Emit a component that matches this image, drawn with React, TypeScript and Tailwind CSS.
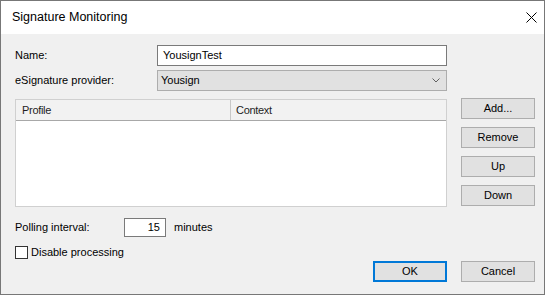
import React from 'react';

const btn =
    'h-[21px] w-[74px] bg-[#e1e1e1] border border-[#adadad] text-[11px] text-black flex items-center justify-center';

const App: React.FC = () => {
    return (
        <div className="w-[550px] h-[298px] bg-white font-['Liberation_Sans',Arial,sans-serif]">
            <div className="w-[545px] h-[295px] border border-[#777777] flex flex-col">
                {/* title bar */}
                <div className="h-[33px] bg-white flex items-center justify-between pl-[11px] pr-[7px] shrink-0">
                    <span className="text-[12.5px] text-black">Signature Monitoring</span>
                    <svg width="11" height="11" viewBox="0 0 11 11" className="mr-[0px]">
                        <path d="M0.5 0.5 L10.5 10.5 M10.5 0.5 L0.5 10.5" stroke="#000" strokeWidth="1" />
                    </svg>
                </div>

                <div className="flex-1 bg-[#f0f0f0] pl-[14px] text-[11px] text-black">
                    <div className="flex items-center mt-[11px] h-[21px]">
                        <span className="w-[142px]">Name:</span>
                        <div className="w-[290px] h-[21px] bg-white border border-[#7a7a7a] flex items-center pl-[5px]">
                            YousignTest
                        </div>
                    </div>
                    <div className="flex items-center mt-[4px] h-[21px]">
                        <span className="w-[142px]">eSignature provider:</span>
                        <div className="w-[290px] h-[21px] bg-[#e1e1e1] border border-[#adadad] flex items-center justify-between pl-[3px] pr-[6px]">
                            <span>Yousign</span>
                            <svg width="8" height="5" viewBox="0 0 8 5">
                                <path d="M0.5 0.5 L4 4 L7.5 0.5" stroke="#606060" fill="none" strokeWidth="1" />
                            </svg>
                        </div>
                    </div>

                    <div className="flex mt-[7px]">
                        <div className="mt-[1px] w-[432px] h-[108px] bg-white border border-[#d0d0d0] flex flex-col">
                            <div className="h-[21px] flex bg-[#f2f2f2] border-b border-[#a8a8a8] text-[#1e1e1e] tracking-[-0.3px]">
                                <div className="w-[215px] border-r border-[#c8c8c8] pl-[6px] flex items-center">Profile</div>
                                <div className="flex-1 pl-[5px] flex items-center">Context</div>
                            </div>
                        </div>
                        <div className="ml-[14px] flex flex-col gap-[8px]">
                            <div className={btn}>Add...</div>
                            <div className={btn}>Remove</div>
                            <div className={btn}>Up</div>
                            <div className={btn}>Down</div>
                        </div>
                    </div>

                    <div className="flex items-center mt-[11px] h-[19px]">
                        <span className="w-[109px]">Polling interval:</span>
                        <div className="w-[42px] h-[19px] bg-white border border-[#7a7a7a] flex items-center justify-end pr-[5px]">
                            15
                        </div>
                        <span className="ml-[8px]">minutes</span>
                    </div>

                    <div className="flex items-center mt-[9px] h-[13px]">
                        <div className="w-[13px] h-[13px] bg-white border border-[#333333]" />
                        <span className="ml-[3px]">Disable processing</span>
                    </div>

                    <div className="flex mt-[2px] pl-[358px] gap-[14px]">
                        <div className="h-[21px] w-[74px] bg-[#e1e1e1] border-2 border-[#0078d7] text-[11px] flex items-center justify-center">
                            OK
                        </div>
                        <div className={btn}>Cancel</div>
                    </div>
                </div>
            </div>
        </div>
    );
};

export default App;
